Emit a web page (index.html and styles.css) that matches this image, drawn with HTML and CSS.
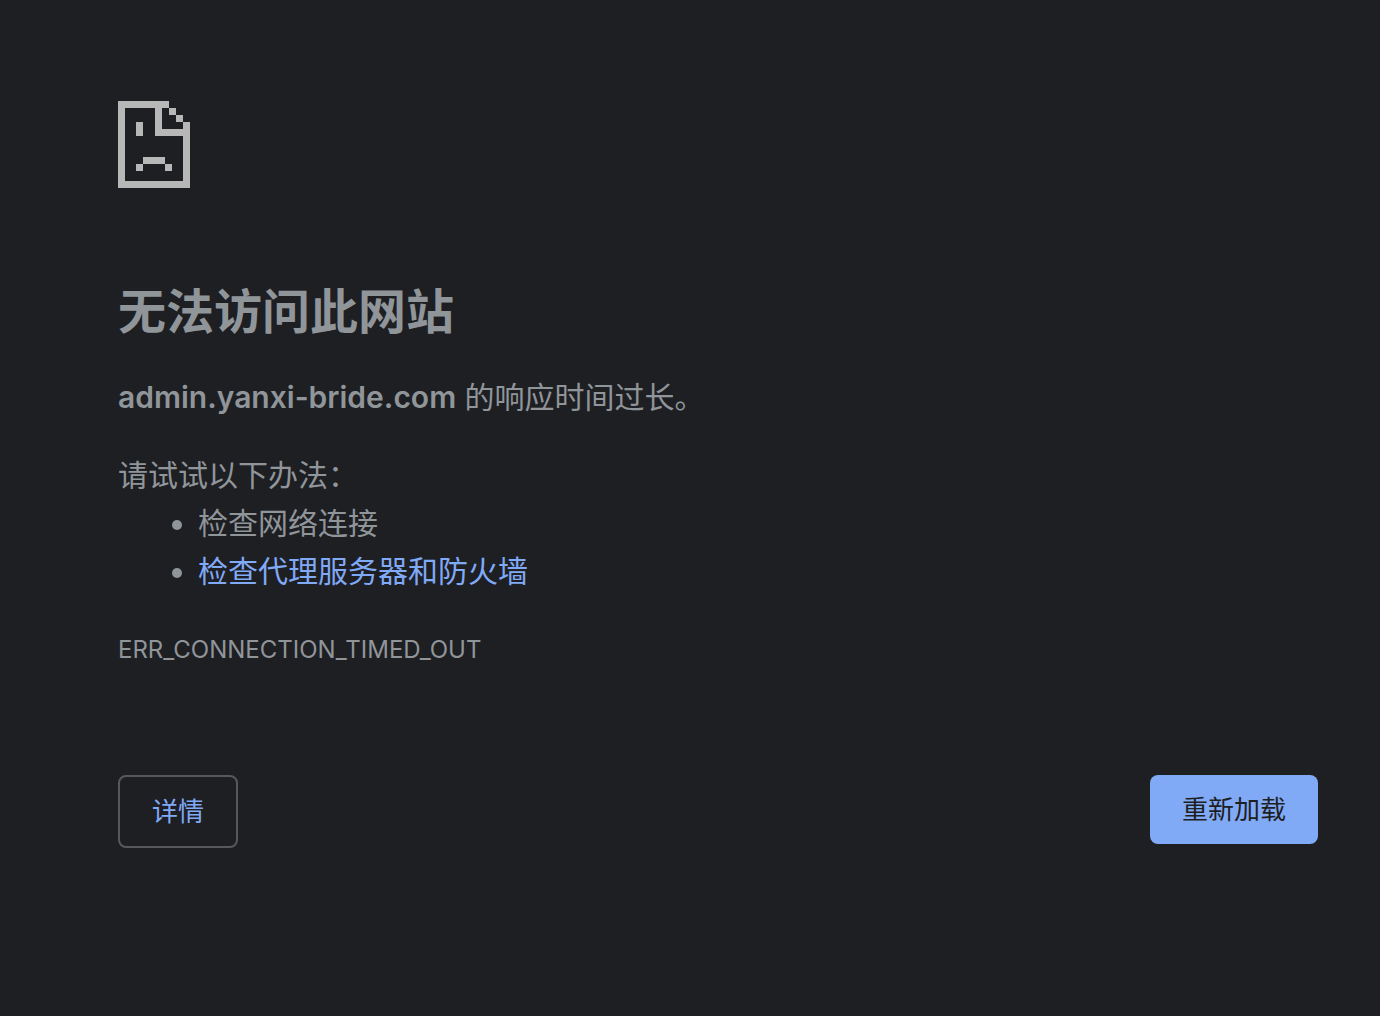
FILE: index.html
```html
<!DOCTYPE html>
<html lang="zh-CN">
<head>
<meta charset="utf-8">
<meta name="viewport" content="width=device-width, initial-scale=1">
<title>admin.yanxi-bride.com</title>
<link rel="stylesheet" href="styles.css">
</head>
<body>
<main class="error-page">
  <svg class="error-icon" viewBox="0 0 72 87" aria-hidden="true" shape-rendering="crispEdges">
    <path d="M0 0H51V7H44V28H65V21H72V87H0ZM7 7V80H65V35H37V7Z" fill-rule="evenodd"/>
    <path d="M51 7h7v7h7v7h-7v-7h-7zM18 21h7v14h-7zM25 56h22v7h7v7h-7v-7h-22v7h-7v-7h7z"/>
  </svg>
  <h1 class="title">无法访问此网站</h1>
  <p class="summary"><strong>admin.yanxi-bride.com</strong> 的响应时间过长。</p>
  <section class="suggestions">
    <p class="suggestions-lead">请试试以下办法：</p>
    <ul class="suggestions-list">
      <li>检查网络连接</li>
      <li><a class="link" href="#proxy">检查代理服务器和防火墙</a></li>
    </ul>
  </section>
  <p class="error-code">ERR_CONNECTION_TIMED_OUT</p>
  <div class="actions">
    <button class="button button-secondary" type="button">详情</button>
    <button class="button button-primary" type="button">重新加载</button>
  </div>
</main>
</body>
</html>
```

FILE: styles.css
```css
* {
  box-sizing: border-box;
}

body {
  margin: 0;
  background: #1e1f23;
  color: #90959a;
  font-family: Inter, "Noto Sans CJK SC", sans-serif;
  font-size: 30px;
  line-height: 48px;
}

.error-page {
  padding: 101px 62px 100px 118px;
}

.error-icon {
  display: block;
  width: 72px;
  height: 87px;
  fill: #b7b7b7;
}

.title {
  margin: 96px 0 0;
  font-size: 48px;
  font-weight: 700;
  line-height: 56px;
}

.summary {
  margin: 33px 0 0;
}

.summary strong {
  font-weight: 600;
}

.suggestions {
  margin-top: 30px;
}

.suggestions-lead {
  margin: 0;
}

.suggestions-list {
  margin: 0;
  padding-left: 80px;
}

.link {
  color: #80a9f6;
  text-decoration: none;
}

.error-code {
  margin: 31px 0 0;
  font-size: 24px;
}

.actions {
  display: flex;
  justify-content: space-between;
  align-items: flex-start;
  margin-top: 101px;
}

.button {
  border: 0;
  border-radius: 8px;
  padding: 16px 32px;
  font: inherit;
  font-size: 26px;
  line-height: 37px;
  cursor: pointer;
}

.button-secondary {
  border: 2px solid #56585c;
  background: transparent;
  color: #80a9f6;
}

.button-primary {
  background: #80a9f6;
  color: #1e1f23;
}
```
